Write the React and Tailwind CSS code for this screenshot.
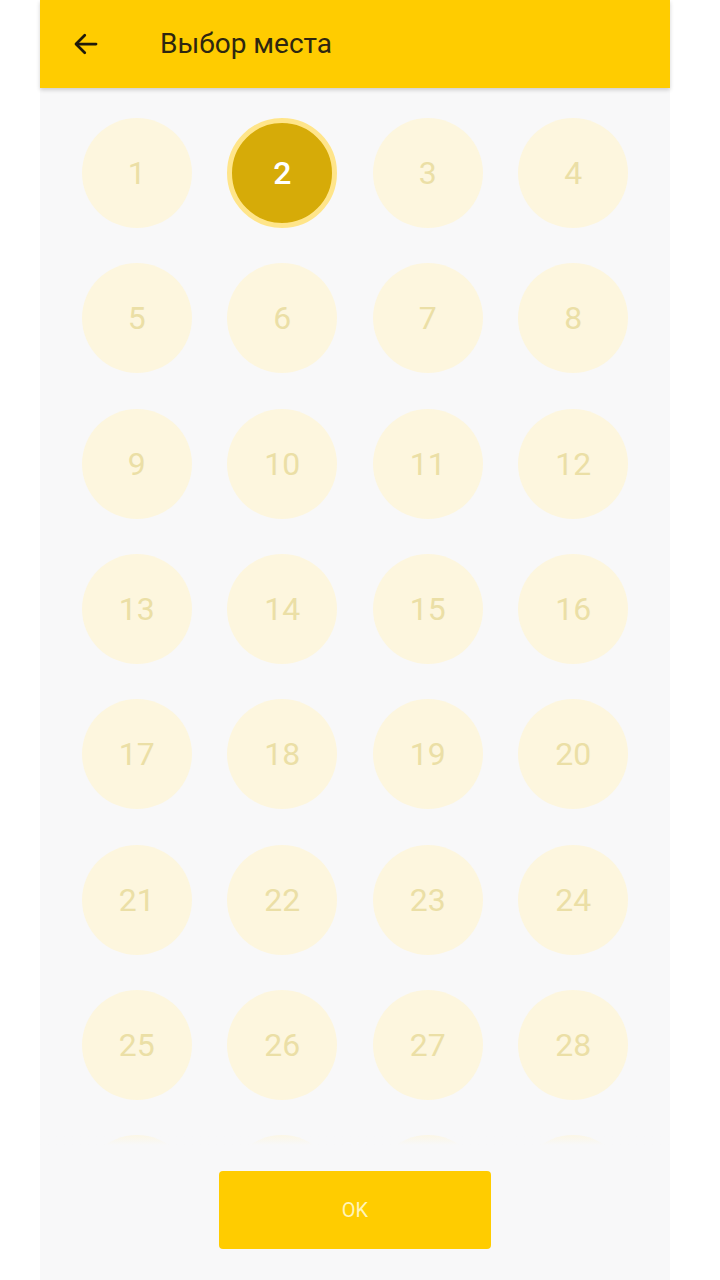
import React from "react";

export default function App() {
  const seats = Array.from({ length: 32 }, (_, i) => i + 1);
  return (
    <div className="flex w-[720px] h-[1280px] bg-white overflow-hidden" style={{ fontFamily: "Roboto, 'Noto Sans', sans-serif" }}>
      <div className="w-[40px] shrink-0 bg-white" />
      <div className="w-[630px] shrink-0 h-full bg-[#f8f8f9] flex flex-col">
        <div className="h-[88px] shrink-0 bg-[#ffcc00] flex items-center shadow-[0_2px_4px_rgba(0,0,0,0.18)] relative z-10">
          <svg className="ml-[31px]" width="30" height="30" viewBox="0 0 24 24" fill="none" stroke="#1f1a0a" strokeWidth="2.2" strokeLinecap="round" strokeLinejoin="round">
            <path d="M20 12H4.5" />
            <path d="M11 5l-7 7 7 7" />
          </svg>
          <div className="ml-[59px] text-[28px] text-[#2e2610] leading-none">Выбор места</div>
        </div>
        <div className="flex-1 overflow-hidden px-6 pt-[30px] relative">
          <div className="grid grid-cols-4 gap-y-[35.33px]">
            {seats.map((n) => (
              <div key={n} className="flex justify-center">
                {n === 2 ? (
                  <div className="w-[110px] h-[110px] rounded-full bg-[#d6ab08] border-[5px] border-[#ffe58a] flex items-center justify-center text-white text-[32px] font-medium">
                    {n}
                  </div>
                ) : n > 28 ? (
                  <div className="w-[110px] h-[110px] rounded-full bg-[#fdf6de]" />
                ) : (
                  <div className="w-[110px] h-[110px] rounded-full bg-[#fdf6de] flex items-center justify-center text-[#ebdfa6] text-[32px]">
                    {n}
                  </div>
                )}
              </div>
            ))}
          </div>
          <div className="absolute left-0 right-0 bottom-0 h-[14px] bg-gradient-to-b from-[#f8f8f900] to-[#f8f8f9]" />
        </div>
        <div className="h-[135px] shrink-0 flex justify-center pt-[26px]">
          <div className="w-[272px] h-[78px] rounded-[4px] bg-[#ffcc00] flex items-center justify-center text-[20px] text-[#fff4b8]">
            OK
          </div>
        </div>
      </div>
      <div className="flex-1 bg-white" />
    </div>
  );
}
